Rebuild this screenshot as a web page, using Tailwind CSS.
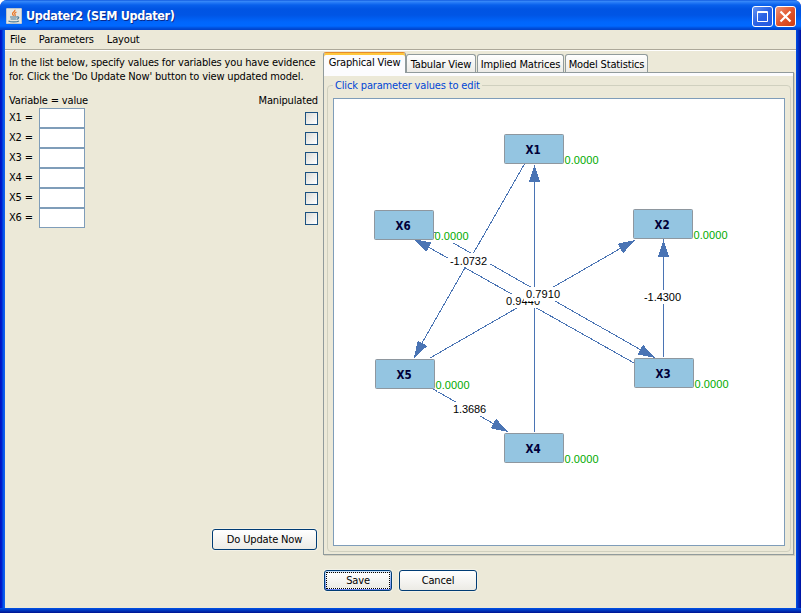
<!DOCTYPE html>
<html lang="en">
<head>
<meta charset="utf-8">
<title>Updater2 (SEM Updater)</title>
<script src="https://cdn.jsdelivr.net/npm/@tailwindcss/browser@4"></script>
</head>
<body class="bg-white overflow-hidden">
<div class="w-[801px] h-[613px] flex flex-col overflow-hidden rounded-t-[7px] bg-[linear-gradient(90deg,#0010c0_0,#0020d0_2px,#0054e8_3px,#1660ee_5px,#0050e6_50%,#0050e6_796px,#0034c8_798px,#0010a0_801px)] font-['DejaVu_Sans_Condensed','DejaVu_Sans',sans-serif] [font-stretch:condensed] text-[11px] leading-[14px] tracking-[-0.16px] text-black">
  <header class="h-[30px] shrink-0 flex items-center pl-[6px] pr-[5px] pt-[2px] bg-[linear-gradient(180deg,#0048d8_0,#3c8cf8_1px,#2c80f8_2px,#0860ec_5px,#0054e3_9px,#0055e5_15px,#0066fc_22px,#0068ff_26px,#0050dc_28px,#0040c8_30px)]">
    <svg class="w-4 h-4 shrink-0 -mt-px" viewBox="0 0 16 16">
      <rect width="16" height="16" rx="1.5" fill="#e6e6e0"/>
      <rect x=".5" y=".5" width="15" height="15" rx="1" fill="none" stroke="#bcc4cc"/>
      <path d="M8.800 1.800c1 2-3.200 2.600-2.200 4.400 .3.700.8 1 .9 1.600M10.500 4c-2 .8-2.300 1.600-1.400 2.700.4.600.2 1-.4 1.500" fill="none" stroke="#e8782a" stroke-width="1.3"/>
      <path d="M4 9h7M4.600 11h5.600M11 9c2.400-.5 2.200 1.700-.3 2.300M2.500 12.900c2 1.300 8.500 1.200 10.500 0" fill="none" stroke="#4b7c9a" stroke-width="1.2"/>
    </svg>
    <h1 class="ml-[4px] -mt-px text-[12.500px] leading-4 font-bold text-white tracking-[-0.32px] whitespace-nowrap [text-shadow:1px_1px_0_#0a2a8c]">Updater2 (SEM Updater)</h1>
    <div class="ml-auto flex gap-[2px] pt-px">
      <svg class="w-[21px] h-[21px]" viewBox="0 0 21 21"><defs><linearGradient id="mb" x2="1" y2="1"><stop stop-color="#6a98f4"/><stop offset=".5" stop-color="#2a62e4"/><stop offset="1" stop-color="#2458e0"/></linearGradient><linearGradient id="cb" x2="1" y2="1"><stop stop-color="#f0987c"/><stop offset=".5" stop-color="#e2552c"/><stop offset="1" stop-color="#cc3c10"/></linearGradient></defs><rect x=".5" y=".5" width="20" height="20" rx="2.500" fill="url(#mb)" stroke="#fff"/><path d="M5.500 5.500h10v10h-10zM5 6.500h11" fill="none" stroke="#fff"/></svg>
      <svg class="w-[21px] h-[21px]" viewBox="0 0 21 21"><rect x=".5" y=".5" width="20" height="20" rx="2.500" fill="url(#cb)" stroke="#fff"/><path d="M5.500 5.500l10 10M15.500 5.500l-10 10" stroke="#fff" stroke-width="2.200"/></svg>
    </div>
  </header>
  <div class="mx-[5px] h-[578px] shrink-0 flex flex-col bg-[#ece9d8]">
    <nav class="h-[19px] shrink-0 flex gap-[13px] pl-[5px] pt-[3px]">
      <span>File</span><span>Parameters</span><span>Layout</span>
    </nav>
    <div class="h-[2px] shrink-0 bg-white border-t border-[#aca899]"></div>
    <div class="flex h-[504px] shrink-0">
      <section class="w-[318px] shrink-0 flex flex-col pl-[4px] pr-[6px] pt-[5px]">
        <p class="whitespace-nowrap">In the list below, specify values for variables you have evidence<br>for. Click the 'Do Update Now' button to view updated model.</p>
        <div class="flex justify-between mt-[10px] -mr-px"><span>Variable = value</span><span>Manipulated</span></div>
        <div class="flex flex-col -mr-px">
          <label class="flex items-center h-5"><span class="w-[30px]">X1 =</span><input class="w-[46px] h-5 bg-white border border-[#7f9db9]"><i class="ml-auto w-[13px] h-[13px] border border-[#1c5180] bg-linear-to-br from-[#dcdcd7] to-white"></i></label>
          <label class="flex items-center h-5"><span class="w-[30px]">X2 =</span><input class="w-[46px] h-5 bg-white border border-[#7f9db9]"><i class="ml-auto w-[13px] h-[13px] border border-[#1c5180] bg-linear-to-br from-[#dcdcd7] to-white"></i></label>
          <label class="flex items-center h-5"><span class="w-[30px]">X3 =</span><input class="w-[46px] h-5 bg-white border border-[#7f9db9]"><i class="ml-auto w-[13px] h-[13px] border border-[#1c5180] bg-linear-to-br from-[#dcdcd7] to-white"></i></label>
          <label class="flex items-center h-5"><span class="w-[30px]">X4 =</span><input class="w-[46px] h-5 bg-white border border-[#7f9db9]"><i class="ml-auto w-[13px] h-[13px] border border-[#1c5180] bg-linear-to-br from-[#dcdcd7] to-white"></i></label>
          <label class="flex items-center h-5"><span class="w-[30px]">X5 =</span><input class="w-[46px] h-5 bg-white border border-[#7f9db9]"><i class="ml-auto w-[13px] h-[13px] border border-[#1c5180] bg-linear-to-br from-[#dcdcd7] to-white"></i></label>
          <label class="flex items-center h-5"><span class="w-[30px]">X6 =</span><input class="w-[46px] h-5 bg-white border border-[#7f9db9]"><i class="ml-auto w-[13px] h-[13px] border border-[#1c5180] bg-linear-to-br from-[#dcdcd7] to-white"></i></label>
        </div>
        <button class="mt-auto mb-[5px] ml-auto w-[105px] h-[21px] rounded-[3px] border border-[#003c74] bg-linear-to-b from-white to-[#ecebe5] shadow-[0_0_0_1px_#f3f1e6] leading-[19px]">Do Update Now</button>
      </section>
      <section class="w-[471px] shrink-0 flex flex-col pt-px">
        <div class="flex h-[20px] items-end relative z-10">
          <div class="w-[83px] h-[21px] -mb-px shrink-0 bg-[#fcfcfe] rounded-t-[3px] border-x border-[#919b9c] border-t border-t-[#e68b2c] shadow-[inset_0_2px_0_#ffc73c] pt-[3px] flex justify-center whitespace-nowrap">Graphical View</div>
          <div class="w-[70px] h-[18px] shrink-0 rounded-t-[3px] border border-b-0 border-[#919b9c] bg-linear-to-b from-white to-[#ecebe6] flex justify-center pt-[3px] whitespace-nowrap">Tabular View</div>
          <div class="ml-[1px] w-[87px] h-[18px] shrink-0 rounded-t-[3px] border border-b-0 border-[#919b9c] bg-linear-to-b from-white to-[#ecebe6] flex justify-center pt-[3px] whitespace-nowrap">Implied Matrices</div>
          <div class="ml-[1px] w-[83px] h-[18px] shrink-0 rounded-t-[3px] border border-b-0 border-[#919b9c] bg-linear-to-b from-white to-[#ecebe6] flex justify-center pt-[3px] whitespace-nowrap">Model Statistics</div>
        </div>
        <div class="h-[483px] shrink-0 border border-[#919b9c] shadow-[1px_1px_0_#d2cfbf]">
          <div class="h-[3px] bg-[#fcfcfe]"></div>
          <fieldset class="ml-[3px] w-[464px] h-[476px] border border-[#d0d0bf] rounded-[4px] px-[5px] min-w-0">
            <legend class="px-[2px] h-[18px] leading-[19px] text-[#0046d5] whitespace-nowrap">Click parameter values to edit</legend>
            <div class="w-[452px] h-[448px] mt-[4px] bg-white border border-[#7f9db9]">
            <svg class="block w-[450px] h-[446px] tracking-normal" viewBox="334 99 450 446" font-family="'Liberation Sans',Arial,sans-serif" font-size="11">
              <defs><path id="head" d="M0 0L-17 -5.500V5.500Z" fill="#4a74b4"/></defs>
              <g stroke="#4a74b4" fill="none" shape-rendering="crispEdges">
                <path d="M525 163L414 357M434 232L655 358M634 363L414 239M430 358L635 240M534.500 432V165M663.500 357V239M433 389L508 432"/>
              </g>
              <g shape-rendering="crispEdges">
                <use href="#head" transform="translate(414 358) rotate(120)"/>
                <use href="#head" transform="translate(655 358) rotate(29.700)"/>
                <use href="#head" transform="translate(414 239) rotate(209.400)"/>
                <use href="#head" transform="translate(635 240) rotate(-30)"/>
                <use href="#head" transform="translate(534.500 165) rotate(-90)"/>
                <use href="#head" transform="translate(663.500 240) rotate(-90)"/>
                <use href="#head" transform="translate(508 432) rotate(30)"/>
              </g>
              <g fill="#fff">
                <path d="M448 253h42v14h-42zM642 290h41v14h-41zM451 402h37v14h-37zM504 294h38v14h-38zM436 231h35v12h-35zM437 380h35v12h-35z"/>
              </g>
              <g fill="#000">
                <text x="450" y="265" textLength="37">-1.0732</text>
                <text x="644" y="301" textLength="37">-1.4300</text>
                <text x="453" y="413" textLength="33">1.3686</text>
                <text x="506" y="305" textLength="34">0.9440</text>
                <rect x="524" y="287" width="38" height="14" fill="#fff"/>
                <text x="526" y="298" textLength="34">0.7910</text>
              </g>
              <g fill="#00aa00">
                <text x="564.500" y="164" textLength="34">0.0000</text>
                <text x="434.500" y="240" textLength="34">0.0000</text>
                <text x="693.500" y="239" textLength="34">0.0000</text>
                <text x="435.500" y="389" textLength="34">0.0000</text>
                <text x="694.500" y="388" textLength="34">0.0000</text>
                <text x="564.500" y="463" textLength="34">0.0000</text>
              </g>
              <g fill="#94c5e1" stroke="#8e979f">
                <rect x="504.500" y="134.500" width="59" height="29" rx="1"/>
                <rect x="374.500" y="210.500" width="59" height="29" rx="1"/>
                <rect x="633.500" y="209.500" width="59" height="29" rx="1"/>
                <rect x="375.500" y="359.500" width="59" height="29" rx="1"/>
                <rect x="634.500" y="358.500" width="59" height="29" rx="1"/>
                <rect x="504.500" y="433.500" width="59" height="29" rx="1"/>
              </g>
              <g fill="#000038" font-family="'DejaVu Sans Condensed','DejaVu Sans',sans-serif" font-size="11.500" font-weight="bold" text-anchor="middle">
                <text x="533" y="154">X1</text><text x="403" y="230">X6</text><text x="662" y="229">X2</text>
                <text x="404" y="379">X5</text><text x="663" y="378">X3</text><text x="533" y="453">X4</text>
              </g>
            </svg>
            </div>
          </fieldset>
        </div>
      </section>
    </div>
    <div class="flex gap-[7px] pl-[319px] pt-[15px]">
      <button class="w-[68px] h-[21px] rounded-[3px] border border-[#003c74] bg-linear-to-b from-[#cee7ff] to-[#6982ee] p-px shadow-[0_0_0_1px_#f3f1e6]"><span class="block h-full bg-linear-to-b from-white to-[#ecebe5] border border-dotted border-black leading-[16px]">Save</span></button>
      <button class="w-[78px] h-[21px] rounded-[3px] border border-[#003c74] bg-linear-to-b from-white to-[#ecebe5] shadow-[0_0_0_1px_#f3f1e6] leading-[19px]">Cancel</button>
    </div>
  </div>
  <div class="h-[5px] shrink-0 bg-linear-to-b from-[#0054e8] to-[#001090]"></div>
</div>
</body>
</html>
